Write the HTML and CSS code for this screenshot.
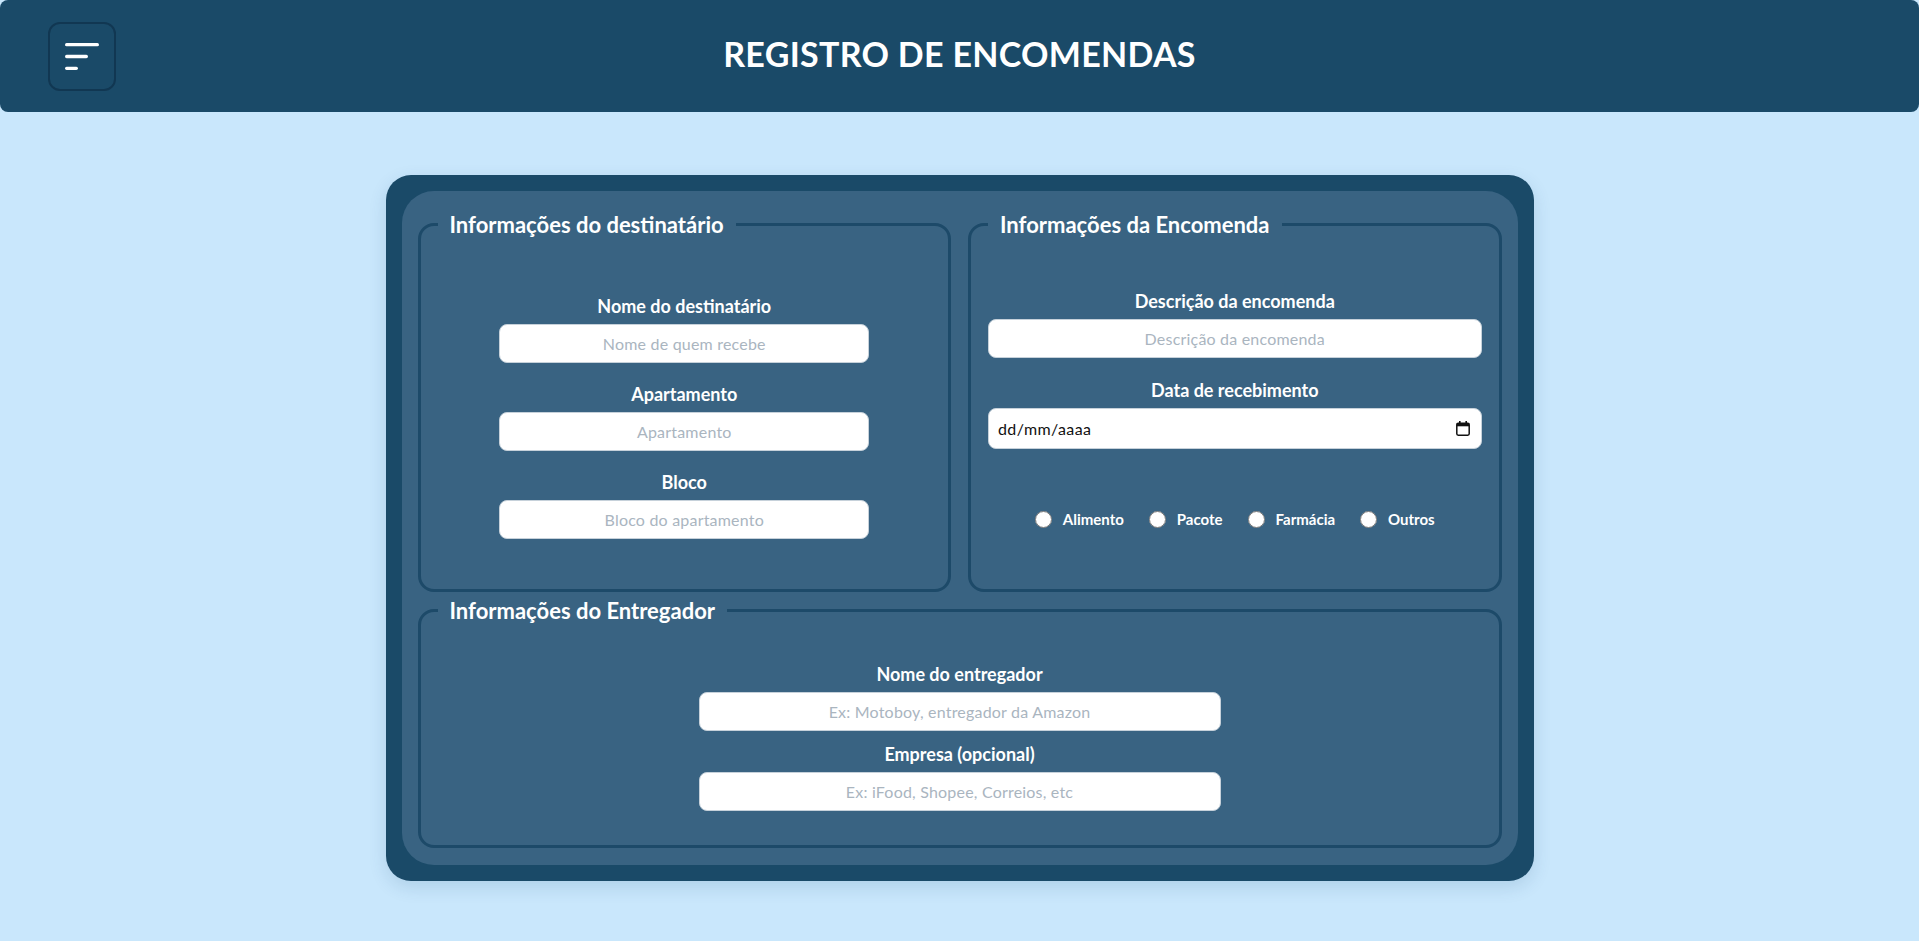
FILE: index.html
```html
<!DOCTYPE html>
<html lang="pt-BR">
<head>
<meta charset="utf-8">
<title>Registro de Encomendas</title>
<link rel="stylesheet" href="styles.css">
</head>
<body>
<header class="topbar">
  <div class="topbar-left">
    <button class="menu-btn" type="button" aria-label="Menu">
      <svg width="34" height="27" viewBox="0 0 34 27" aria-hidden="true">
        <g stroke="#ffffff" stroke-width="3.3" stroke-linecap="round">
          <line x1="1.65" y1="1.65" x2="32.35" y2="1.65"/>
          <line x1="1.65" y1="13.5" x2="21.35" y2="13.5"/>
          <line x1="1.65" y1="25.35" x2="11.35" y2="25.35"/>
        </g>
      </svg>
    </button>
  </div>
  <h1 class="title">REGISTRO DE ENCOMENDAS</h1>
  <div class="topbar-right"></div>
</header>

<main class="page">
  <div class="card">
    <form class="panel">
      <fieldset class="box box-dest">
        <legend>Informações do destinatário</legend>
        <div class="fields narrow">
          <div class="field">
            <label for="nome">Nome do destinatário</label>
            <input id="nome" type="text" placeholder="Nome de quem recebe">
          </div>
          <div class="field">
            <label for="apto">Apartamento</label>
            <input id="apto" type="text" placeholder="Apartamento">
          </div>
          <div class="field">
            <label for="bloco">Bloco</label>
            <input id="bloco" type="text" placeholder="Bloco do apartamento">
          </div>
        </div>
      </fieldset>

      <fieldset class="box box-enc">
        <legend>Informações da Encomenda</legend>
        <div class="fields wide">
          <div class="field">
            <label for="desc">Descrição da encomenda</label>
            <input id="desc" type="text" placeholder="Descrição da encomenda">
          </div>
          <div class="field">
            <label for="data">Data de recebimento</label>
            <div class="date-input" id="data">
              <span>dd/mm/aaaa</span>
              <svg width="14" height="15" viewBox="0 0 14 15" aria-hidden="true">
                <rect x="3" y="0" width="1.6" height="3" fill="#111"/>
                <rect x="9.4" y="0" width="1.6" height="3" fill="#111"/>
                <rect x="0.8" y="2.3" width="12.4" height="11.9" rx="1.4" fill="none" stroke="#111" stroke-width="1.5"/>
                <rect x="0.8" y="2.3" width="12.4" height="3" fill="#111"/>
              </svg>
            </div>
          </div>
        </div>
        <div class="radios">
          <label class="radio"><input type="radio" name="tipo"> <span>Alimento</span></label>
          <label class="radio"><input type="radio" name="tipo"> <span>Pacote</span></label>
          <label class="radio"><input type="radio" name="tipo"> <span>Farmácia</span></label>
          <label class="radio"><input type="radio" name="tipo"> <span>Outros</span></label>
        </div>
      </fieldset>

      <fieldset class="box box-ent">
        <legend>Informações do Entregador</legend>
        <div class="fields half compact">
          <div class="field">
            <label for="entregador">Nome do entregador</label>
            <input id="entregador" type="text" placeholder="Ex: Motoboy, entregador da Amazon">
          </div>
          <div class="field">
            <label for="empresa">Empresa (opcional)</label>
            <input id="empresa" type="text" placeholder="Ex: iFood, Shopee, Correios, etc">
          </div>
        </div>
      </fieldset>
    </form>
  </div>
</main>
</body>
</html>
```

FILE: styles.css
```css
* {
  box-sizing: border-box;
}

html, body {
  margin: 0;
  padding: 0;
}

body {
  background: #c9e7fc;
  font-family: "Lato", "Open Sans", sans-serif;
  color: #ffffff;
  min-height: 941px;
}

/* ---------- Header ---------- */
.topbar {
  height: 112px;
  background: #1a4a68;
  border-radius: 8px;
  display: grid;
  grid-template-columns: 1fr auto 1fr;
  align-items: center;
}

.topbar-left {
  display: flex;
  align-items: center;
  padding-left: 48px;
}

.menu-btn {
  width: 68px;
  height: 69px;
  border: 2px solid #113752;
  border-radius: 12px;
  background: transparent;
  display: flex;
  align-items: center;
  justify-content: center;
  padding: 0;
  cursor: pointer;
}

.menu-btn svg {
  display: block;
}

.title {
  margin: 0 0 5px;
  font-family: "Lato", sans-serif;
  font-weight: 700;
  font-size: 34px;
  line-height: 40px;
  letter-spacing: 0.3px;
  color: #ffffff;
}

/* ---------- Card ---------- */
.page {
  padding-top: 63px;
}

.card {
  width: 1148px;
  margin: 0 auto;
  padding: 16px;
  background: #1a4a68;
  border-radius: 25px;
  box-shadow: 0 6px 18px rgba(20, 70, 110, 0.14);
}

.panel {
  background: #396382;
  border-radius: 32px;
  padding: 17px 16px 17px;
  display: grid;
  grid-template-columns: 1fr 1fr;
  grid-template-rows: 384px 254px;
  column-gap: 17px;
  row-gap: 2px;
}

.box {
  margin: 0;
  min-width: 0;
  border: 3px solid #1d4a69;
  border-radius: 16px;
  padding: 0 17px;
}

.box legend {
  padding: 0 12px;
  font-size: 22px;
  font-weight: 700;
  line-height: 33px;
  color: #ffffff;
}

.box-ent {
  grid-column: 1 / 3;
}

/* ---------- Fields ---------- */
.fields {
  display: flex;
  flex-direction: column;
  align-items: center;
  gap: 20px;
}

.box-dest .fields {
  padding-top: 54px;
}

.box-enc .fields {
  padding-top: 49px;
  gap: 21px;
}

.box-ent .fields {
  padding-top: 36px;
}

.fields.compact {
  gap: 12px;
}

.field {
  display: flex;
  flex-direction: column;
  align-items: center;
  width: 100%;
}

.narrow .field {
  width: 75%;
}

.half .field {
  width: 50%;
}

.field label {
  font-size: 18px;
  font-weight: 700;
  line-height: 22px;
  margin-bottom: 7px;
  color: #ffffff;
}

.field input {
  width: 100%;
  height: 39px;
  border: 1px solid #c6d1da;
  border-radius: 8px;
  background: #ffffff;
  font-family: "Lato", sans-serif;
  font-size: 16px;
  letter-spacing: 0.2px;
  text-align: center;
  color: #222;
  outline: none;
}

.field input::placeholder {
  color: #aab5bf;
}

.date-input {
  width: 100%;
  height: 41px;
  border: 1px solid #c6d1da;
  border-radius: 8px;
  background: #ffffff;
  display: flex;
  align-items: center;
  justify-content: space-between;
  padding: 0 11px 0 9px;
  color: #111;
  font-size: 16px;
  letter-spacing: 0.4px;
}

.date-input svg {
  display: block;
}

/* ---------- Radios ---------- */
.radios {
  margin-top: 60px;
  display: flex;
  justify-content: center;
  gap: 25px;
}

.radio {
  display: flex;
  align-items: center;
  gap: 11px;
  font-size: 15px;
  font-weight: 700;
  line-height: 20px;
  color: #ffffff;
}

.radio input {
  width: 17px;
  height: 17px;
  margin: 0;
}
```
